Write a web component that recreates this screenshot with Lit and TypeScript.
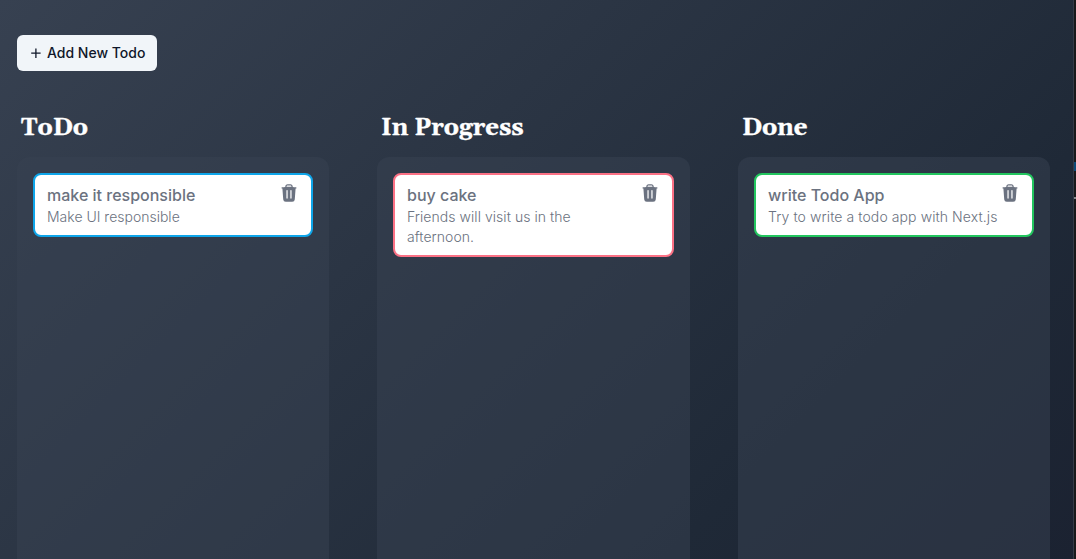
import { LitElement, html, css } from "lit";
import { customElement, property } from "lit/decorators.js";

interface Todo {
  title: string;
  description: string;
}

interface Board {
  name: string;
  tone: string;
  todos: Todo[];
}

const boards: Board[] = [
  { name: "ToDo", tone: "blue", todos: [{ title: "make it responsible", description: "Make UI responsible" }] },
  { name: "In Progress", tone: "rose", todos: [{ title: "buy cake", description: "Friends will visit us in the afternoon." }] },
  { name: "Done", tone: "green", todos: [{ title: "write Todo App", description: "Try to write a todo app with Next.js" }] },
];

@customElement("todo-card")
export class TodoCard extends LitElement {
  @property({ attribute: false }) todo!: Todo;
  @property() tone = "blue";

  static styles = css`
    :host { display: block; }
    .card {
      box-sizing: border-box;
      display: flex;
      justify-content: space-between;
      min-height: 64px;
      padding: 8px 12px 8px 12px;
      border: 2px solid #0ea5e9;
      border-radius: 8px;
      background: #fff;
      color: #6b7280;
    }
    .rose { border-color: #fb7185; }
    .green { border-color: #22c55e; }
    .text { flex: 1; min-width: 0; padding-right: 28px; }
    .title { margin: 0; font-size: 16px; line-height: 24px; font-weight: 500; }
    .description { margin: 0; font-size: 14px; line-height: 20px; font-weight: 300; width: max-content; max-width: 206px; }
    .rose .description { letter-spacing: 0.05px; }
    .green .description { max-width: 240px; letter-spacing: 0.09px; }
    .green .text { padding-right: 0; }
    .remove { display: block; width: 20px; height: 20px; padding: 0; border: 0; background: none; color: inherit; flex: none; }
    svg { display: block; }
  `;

  render() {
    return html`
      <article class="card ${this.tone}">
        <div class="text">
          <h3 class="title">${this.todo.title}</h3>
          <p class="description">${this.todo.description}</p>
        </div>
        <button class="remove" aria-label="Delete">
          <svg width="20" height="20" viewBox="0 0 24 24" fill="currentColor">
            <path fill-rule="evenodd" clip-rule="evenodd" d="M16.5 4.478v.227a48.816 48.816 0 013.878.512.75.75 0 11-.256 1.478l-.209-.035-1.005 13.07a3 3 0 01-2.991 2.77H8.084a3 3 0 01-2.991-2.77L4.087 6.66l-.209.035a.75.75 0 01-.256-1.478A48.567 48.567 0 017.5 4.705v-.227c0-1.564 1.213-2.9 2.816-2.951a52.662 52.662 0 013.369 0c1.603.051 2.815 1.387 2.815 2.951zm-6.136-1.452a51.196 51.196 0 013.273 0C14.39 3.05 15 3.684 15 4.478v.113a49.488 49.488 0 00-6 0v-.113c0-.794.609-1.428 1.364-1.452zM8.9 9v9a.75.75 0 001.5 0V9a.75.75 0 00-1.5 0zm4.7 0v9a.75.75 0 001.5 0V9a.75.75 0 00-1.5 0z" />
          </svg>
        </button>
      </article>
    `;
  }
}

@customElement("app-root")
export class AppRoot extends LitElement {
  static styles = css`
    :host {
      display: flex;
      height: 559px;
      overflow: hidden;
      background: #18191b;
      font-family: Inter, "Liberation Sans", sans-serif;
    }
    .page {
      box-sizing: border-box;
      flex: 1;
      display: flex;
      flex-direction: column;
      padding: 35px 23px 0 17px;
      background: linear-gradient(135deg, #374151, #1f2937 75%, #1b2231);
      border-right: 1px solid #343b47;
    }
    .edge {
      width: 2px;
      display: flex;
      flex-direction: column;
      padding-top: 162px;
      gap: 26px;
    }
    .mark { height: 9px; background: #0b4a78; }
    .tick { height: 2px; background: #85878a; }
    .add {
      align-self: flex-start;
      box-sizing: border-box;
      display: flex;
      align-items: center;
      gap: 5px;
      width: 140px;
      height: 36px;
      padding: 0 0 0 12px;
      border: 0;
      border-radius: 6px;
      background: #f1f5f9;
      color: #0f172a;
      font: 500 14px/20px Inter, sans-serif;
      white-space: nowrap;
    }
    .boards {
      flex: 1;
      display: grid;
      grid-template-columns: 312px 313px 312px;
      column-gap: 48px;
      padding-top: 40px;
    }
    .board { display: flex; flex-direction: column; }
    .name {
      box-sizing: border-box;
      margin: 0;
      padding: 1px 0 0 4px;
      height: 46px;
      font: 700 24px/32px Gelasio, Georgia, "Liberation Serif", serif;
      -webkit-text-stroke: 0.4px #fff;
      color: #fff;
      white-space: nowrap;
    }
    .list {
      flex: 1;
      padding: 16px;
      border-radius: 12px 12px 0 0;
      background: rgba(55, 65, 81, 0.5);
    }
  `;

  render() {
    return html`
      <main class="page">
        <button class="add">
          <svg width="13" height="13" viewBox="0 0 13 13" fill="none" stroke="currentColor" stroke-width="1.3">
            <path d="M6.9 1.4v9.6M2.2 6.2h9.4" />
          </svg>
          <span>Add New Todo</span>
        </button>
        <div class="boards">
          ${boards.map((board) => html`
            <section class="board">
              <h2 class="name">${board.name}</h2>
              <div class="list">
                ${board.todos.map((todo) => html`<todo-card .todo=${todo} .tone=${board.tone}></todo-card>`)}
              </div>
            </section>
          `)}
        </div>
      </main>
      <div class="edge"><div class="mark"></div><div class="tick"></div></div>
    `;
  }
}
